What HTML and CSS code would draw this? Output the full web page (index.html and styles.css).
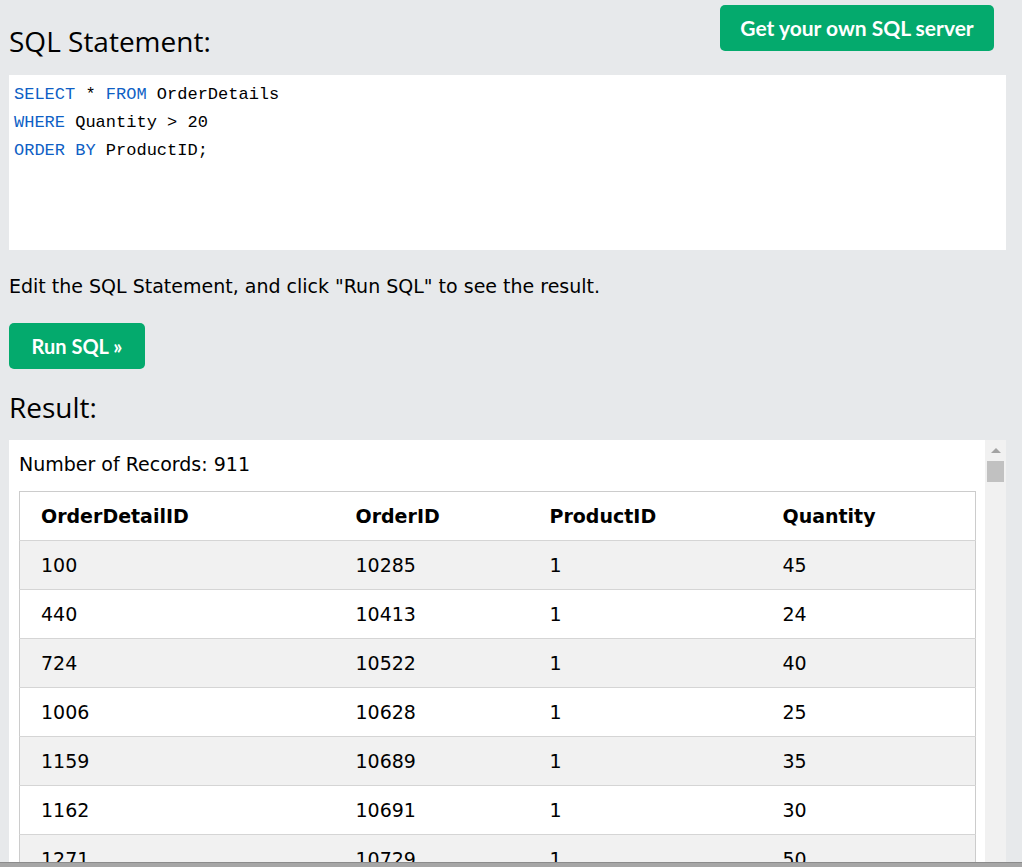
FILE: index.html
```html
<!DOCTYPE html>
<html>
<head>
<meta charset="utf-8">
<link rel="stylesheet" href="styles.css">
</head>
<body>
<div class="page">
  <div class="topbar">
    <h2 class="heading">SQL Statement:</h2>
    <a class="btn btn-server">Get your own SQL server</a>
  </div>
  <div class="code">
    <div><span class="kw">SELECT</span> * <span class="kw">FROM</span> OrderDetails</div>
    <div><span class="kw">WHERE</span> Quantity &gt; 20</div>
    <div><span class="kw">ORDER BY</span> ProductID;</div>
  </div>
  <p class="hint">Edit the SQL Statement, and click "Run SQL" to see the result.</p>
  <a class="btn btn-run">Run SQL »</a>
  <h2 class="heading result-heading">Result:</h2>
  <div class="result">
    <div class="result-inner">
      <div class="count">Number of Records: 911</div>
      <table class="tbl">
        <colgroup><col class="c1"><col class="c2"><col class="c3"><col class="c4"></colgroup>
        <tr><th>OrderDetailID</th><th>OrderID</th><th>ProductID</th><th>Quantity</th></tr>
        <tr><td>100</td><td>10285</td><td>1</td><td>45</td></tr>
        <tr><td>440</td><td>10413</td><td>1</td><td>24</td></tr>
        <tr><td>724</td><td>10522</td><td>1</td><td>40</td></tr>
        <tr><td>1006</td><td>10628</td><td>1</td><td>25</td></tr>
        <tr><td>1159</td><td>10689</td><td>1</td><td>35</td></tr>
        <tr><td>1162</td><td>10691</td><td>1</td><td>30</td></tr>
        <tr><td>1271</td><td>10729</td><td>1</td><td>50</td></tr>
        <tr><td>1319</td><td>10748</td><td>1</td><td>44</td></tr>
      </table>
    </div>
    <div class="vscroll">
      <div class="arrow"></div>
      <div class="thumb"></div>
    </div>
  </div>
</div>
<div class="hbar"></div>
</body>
</html>
```
FILE: styles.css
```css
html, body {
  margin: 0;
  padding: 0;
  background: #e7e9eb;
  height: 867px;
  overflow: hidden;
}
.page {
  padding: 0 16px 0 9px;
}
.topbar {
  display: flex;
  justify-content: space-between;
  align-items: flex-start;
  height: 75px;
}
.heading {
  font-family: "Open Sans", "Noto Sans", sans-serif;
  font-weight: 400;
  font-size: 28px;
  line-height: 36px;
  color: #000;
  margin: 23px 0 0 0;
}
.btn {
  display: inline-block;
  background: #04aa6d;
  color: #fff;
  font-family: "Lato", "Open Sans", sans-serif;
  font-weight: 700;
  border-radius: 5px;
  text-decoration: none;
  box-sizing: border-box;
}
.btn-server {
  margin-top: 5px;
  margin-right: 12px;
  width: 274px;
  height: 46px;
  line-height: 45px;
  font-size: 21px;
  text-align: center;
}
.code {
  background: #fff;
  height: 175px;
  box-sizing: border-box;
  padding: 6px 5px;
  font-family: "Liberation Mono", monospace;
  font-size: 17px;
  line-height: 28px;
  color: #000;
}
.kw { color: #0f5fc5; }
.hint {
  font-family: "DejaVu Sans", Verdana, sans-serif;
  font-size: 19px;
  line-height: 22px;
  margin: 25px 0 26px 0;
  color: #000;
}
.btn-run {
  width: 136px;
  height: 46px;
  line-height: 47px;
  font-size: 20px;
  text-align: center;
}
.result-heading {
  margin: 20px 0 15px 0;
}
.result {
  display: flex;
  background: #fff;
  height: 440px;
  margin-right: 0;
}
.result-inner {
  flex: 1;
  padding: 11px 10px 0 10px;
  overflow: hidden;
  font-family: "DejaVu Sans", Verdana, sans-serif;
  font-size: 19px;
  color: #000;
}
.count {
  line-height: 26px;
  margin-bottom: 14px;
}
.tbl {
  border-collapse: collapse;
  width: 956px;
  border: 1px solid #cccccc;
  table-layout: fixed;
}
.c1 { width: 315px; }
.c2 { width: 194px; }
.c3 { width: 233px; }
.c4 { width: 214px; }
.tbl th, .tbl td {
  text-align: left;
  padding: 0 0 0 21px;
  height: 48px;
  line-height: 22px;
  border-bottom: 1px solid #d5d5d5;
}
.tbl th {
  font-weight: 700;
}
.tbl tr:nth-child(even) {
  background: #f1f1f1;
}
.vscroll {
  width: 21px;
  background: #f1f1f1;
  display: flex;
  flex-direction: column;
  align-items: center;
}
.arrow {
  width: 0;
  height: 0;
  margin-top: 8px;
  border-left: 5px solid transparent;
  border-right: 5px solid transparent;
  border-bottom: 5px solid #a3a3a3;
}
.thumb {
  margin-top: 8px;
  width: 17px;
  height: 21px;
  background: #c1c1c1;
}
.hbar {
  position: fixed;
  left: 0;
  right: 0;
  bottom: 0;
  height: 4px;
  background: #a6a6a6;
  border-top: 1px solid #8c8c8c;
}
```
